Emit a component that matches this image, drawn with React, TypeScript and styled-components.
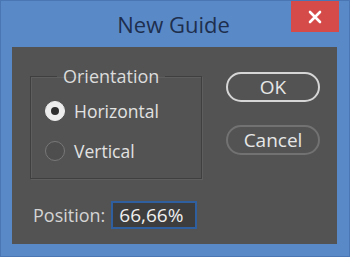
import styled, { createGlobalStyle } from "styled-components";

const GlobalStyle = createGlobalStyle`
  html, body {
    margin: 0;
    padding: 0;
    background: #5a89c8;
  }
  body {
    font-family: "Open Sans", "Noto Sans", sans-serif;
  }
`;

function App() {
  return (
    <>
      <GlobalStyle />
      <Window>
        <TitleBar>
          <Title>New Guide</Title>
          <CloseButton aria-label="Close">
            <svg width="14" height="14" viewBox="0 0 14 14">
              <path
                d="M2 2 L12 12 M12 2 L2 12"
                stroke="#fff"
                strokeWidth="2.6"
                strokeLinecap="round"
              />
            </svg>
          </CloseButton>
        </TitleBar>
        <Panel>
          <TopRow>
            <Group>
              <Legend>Orientation</Legend>
              <RadioRow>
                <Radio checked />
                <RadioLabel>Horizontal</RadioLabel>
              </RadioRow>
              <RadioRow>
                <Radio />
                <RadioLabel>Vertical</RadioLabel>
              </RadioRow>
            </Group>
            <Buttons>
              <Button primary>OK</Button>
              <Button>Cancel</Button>
            </Buttons>
          </TopRow>
          <PositionRow>
            <FieldLabel>Position:</FieldLabel>
            <Field>66,66%</Field>
          </PositionRow>
        </Panel>
      </Window>
    </>
  );
}

export default App;

const Window = styled.div`
  width: 350px;
  height: 257px;
  box-sizing: border-box;
  display: flex;
  flex-direction: column;
  background: #5a89c8;
  border: 1px solid #4a77b4;
  padding: 0 12px 12px 11px;
`;

const TitleBar = styled.div`
  height: 46px;
  display: grid;
  grid-template-columns: 1fr auto 1fr;
  margin-right: -2px;
`;

const Title = styled.div`
  grid-column: 2;
  align-self: center;
  margin-top: -1px;
  margin-left: -4px;
  font-size: 22px;
  color: #1e2f4e;
`;

const CloseButton = styled.div`
  grid-column: 3;
  justify-self: end;
  width: 48px;
  height: 31px;
  background: #d44b49;
  display: flex;
  align-items: center;
  justify-content: center;
`;

const Panel = styled.div`
  flex: 1;
  background: #535353;
  display: flex;
  flex-direction: column;
  padding: 17px 17px 0 18px;
`;

const TopRow = styled.div`
  display: flex;
  gap: 24px;
`;

const Group = styled.fieldset`
  margin: 0;
  width: 172px;
  height: 115px;
  box-sizing: border-box;
  border: 1px solid #3f3f3f;
  box-shadow: 1px 1px 0 #5e5e5e, inset 1px 1px 0 #5e5e5e;
  padding: 10px 0 0 14px;
  display: flex;
  flex-direction: column;
  gap: 14px;
`;

const Legend = styled.legend`
  margin-left: 12px;
  padding: 0 6px;
  font-size: 18px;
  color: #dcdcdc;
`;

const RadioRow = styled.div`
  display: flex;
  align-items: center;
  gap: 9px;
  height: 26px;
`;

const Radio = styled.span<{ checked?: boolean }>`
  width: 20px;
  height: 20px;
  box-sizing: border-box;
  border-radius: 50%;
  background: ${(p) => (p.checked ? "#ececec" : "#4e4e4e")};
  border: 1.5px solid ${(p) => (p.checked ? "#ececec" : "#787878")};
  display: flex;
  align-items: center;
  justify-content: center;
  &::after {
    content: "";
    width: 8px;
    height: 8px;
    border-radius: 50%;
    background: ${(p) => (p.checked ? "#2e2e2e" : "transparent")};
  }
`;

const RadioLabel = styled.span`
  font-size: 17.5px;
  color: #e2e2e2;
`;

const Buttons = styled.div`
  display: flex;
  flex-direction: column;
  gap: 23px;
  margin-top: 8px;
`;

const Button = styled.div<{ primary?: boolean }>`
  width: 94px;
  height: 30px;
  box-sizing: border-box;
  border-radius: 15px;
  border: 2px solid ${(p) => (p.primary ? "#d6d6d6" : "#727272")};
  display: flex;
  align-items: center;
  justify-content: center;
  font-size: 19px;
  color: #e6e6e6;
`;

const PositionRow = styled.div`
  display: flex;
  align-items: center;
  gap: 6px;
  margin-top: 22px;
  padding-left: 3px;
`;

const FieldLabel = styled.span`
  font-size: 18px;
  color: #d4d4d4;
`;

const Field = styled.div`
  width: 86px;
  height: 28px;
  box-sizing: border-box;
  background: #3d3d3d;
  border: 2px solid #2f5f9e;
  display: flex;
  align-items: center;
  padding-left: 6px;
  font-size: 19px;
  color: #f0f0f0;
`;
